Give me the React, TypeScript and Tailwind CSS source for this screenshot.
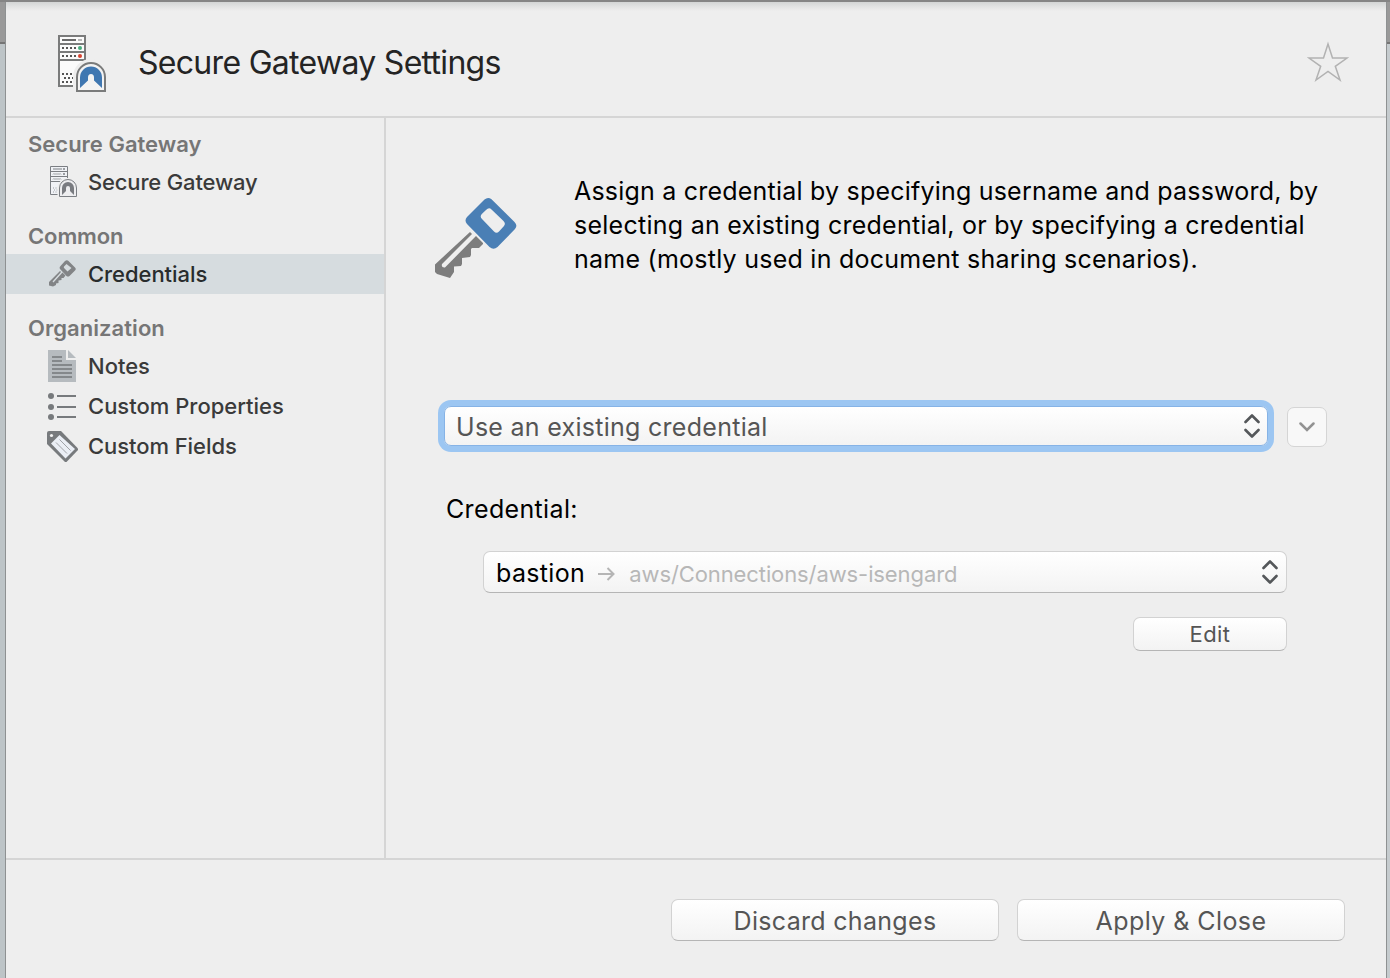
import React from "react";

function Text({ className, children }: { className: string; children: React.ReactNode }) {
  return <span className={"block w-max whitespace-nowrap " + className}>{children}</span>;
}

function GatewayIcon() {
  return (
    <svg className="h-[60px] w-[50px]" viewBox="0 0 50 60">
      <path d="M2 4H28V54H2z" fill="#fbfbfb" stroke="#7a7b7b" strokeWidth="2" />
      <path d="M2 12H28M2 20H28M2 28H28" stroke="#7a7b7b" strokeWidth="2" />
      <path d="M5 8H19" stroke="#6a6a6a" strokeWidth="2" />
      <path d="M21 8H25" stroke="#b5b5b5" strokeWidth="2" />
      <path d="M5 16H19M5 24H19M5 42H17M7 46H17M5 50H17" stroke="#555" strokeWidth="2" strokeDasharray="2 2" />
      <circle cx="23" cy="16" r="2" fill="#46ac7c" />
      <circle cx="23" cy="24" r="2" fill="#d7412f" />
      <path d="M16 60V45A18 18 0 0 1 52 45V60z" fill="#eee" />
      <path d="M20 59V45A14 14 0 0 1 48 45V59z" fill="#f3f3f3" stroke="#7a7b7b" strokeWidth="2" />
      <path d="M23 56V45.500A11 11 0 0 1 45 45.500V56L37 48.500V45.500Q37 42 34 42Q31 42 31 45.500V48.500z" fill="#3f77b1" />
    </svg>
  );
}

function SmallGatewayIcon() {
  return (
    <svg className="h-8 w-7" viewBox="0 0 28 32">
      <path d="M1.500 0.500H18.500V28.500H1.500zM1.500 5.500H18.500M1.500 10.500H18.500M1.500 15.500H18.500" fill="#f0f2f6" stroke="#7b7e83" />
      <path d="M4 3H13" stroke="#7b7e83" />
      <path d="M14 3H16M14 8H16" stroke="#9a9da2" strokeWidth="2" />
      <path d="M4 8.500l1-1 1 1 1-1 1 1 1-1 1 1 1-1 1 1M4 13.500l1-1 1 1 1-1 1 1 1-1 1 1 1-1 1 1" fill="none" stroke="#8b8e93" strokeWidth=".9" />
      <path d="M4 22H9M5 24H9M4 26H9" stroke="#999ca1" strokeDasharray="1 1.500" />
      <path d="M8.500 32V22A10 10 0 0 1 28.500 22V32z" fill="#eee" />
      <path d="M10.500 30.500V22A8.500 8.500 0 0 1 27.500 22V30.500z" fill="#ededef" stroke="#7b7e83" />
      <path d="M13 29V22A6 6 0 0 1 25 22V29L21 25V22Q21 20 19 20Q17 20 17 22V25z" fill="#797b80" />
    </svg>
  );
}

function KeyIcon() {
  return (
    <svg className="h-[82px] w-[84px]" viewBox="0 0 84 82">
      <path
        fillRule="evenodd"
        fill="#4a7fb5"
        d="M50.500 2.500Q54 -0.500 57.500 2.300L80.500 25Q84 28.500 81 32L63.500 50Q59.500 53.500 55.500 50L33 27Q30 23.500 33 20zM52 13L47.800 17Q45.500 19.500 48 22L60 34.500Q62.500 37 65 34.500L70 29Q72 26.500 69.500 24L57.500 12.500Q55 10 52 13z"
      />
      <path
        fill="#7d7d7d"
        d="M36 35L38 37L8 67Q7 71 11 70.500L42 39L49 46V47L45 51H38L37 52V58L36 60L28 61V67L27 69L20 69.500V75L16 81L3 77L1 75V67.500z"
      />
    </svg>
  );
}

function SmallKeyIcon() {
  return (
    <svg className="h-7 w-7" viewBox="0 0 28 28">
      <path fillRule="evenodd" fill="#828486" d="M16 1Q18 -.5 19.500 1L26 7.500Q27.500 9 26 10.500L20.500 16Q19 17 17.500 16L11 9Q10 7.500 11.500 6zM17.500 4L15 6.500Q14.500 7.500 15.300 8.300L18.500 11.500L22.500 8z" />
      <path fill="#828486" d="M11 11L12 12L3.500 21.500L4.500 22.500L13.500 12.500L16.500 15.500L14.500 18H12.500V20L9.500 20.500V23L7 23.500V25L4 26.500L0 25.500V22z" />
    </svg>
  );
}

function NotesIcon() {
  return (
    <svg className="h-8 w-7" viewBox="0 0 28 32">
      <path d="M0 0H18V10H28V32H0z" fill="#b6bbbf" />
      <path d="M20 0L28 8H20z" fill="#b6bbbf" />
      <path d="M4 7H14M4 11H14M4 15H24M4 19H24M4 23H24M4 27H24" stroke="#84888b" strokeWidth="2" />
    </svg>
  );
}

function ListIcon() {
  return (
    <svg className="h-7 w-7" viewBox="0 0 28 28">
      <path d="M9 4H28M9 15H28M9 25H28" stroke="#777a7d" strokeWidth="2" />
      <g fill="#777a7d"><circle cx="3" cy="4" r="3" /><circle cx="3" cy="15" r="3" /><circle cx="3" cy="25" r="3" /></g>
    </svg>
  );
}

function TagIcon() {
  return (
    <svg className="h-8 w-8" viewBox="0 0 32 32">
      <path d="M2 1H14L31 18.500V20L19.500 32H18L0 14V3Q0 1 2 1z" fill="#777a7d" />
      <path d="M12.500 5L28 19L18.500 28.500L4 13.500z" fill="#eaeef5" />
      <path d="M12.500 9.500L23.500 20.500M9 12.500L20 23.500" stroke="#8b8e93" strokeWidth=".8" />
      <circle cx="4.500" cy="5.500" r="1.600" fill="#f2f2f2" />
    </svg>
  );
}

function UpDown() {
  return (
    <svg className="h-6 w-4" viewBox="0 0 16 24" fill="none" stroke="#54575a" strokeWidth="2.600" strokeLinecap="round" strokeLinejoin="round">
      <path d="M1.500 8L8 1.500L14.500 8M1.500 16L8 22.500L14.500 16" />
    </svg>
  );
}

const button = "flex items-center rounded-[7px] border border-[#d2d2d2] border-b-[#b5b5b5] bg-linear-to-b from-white to-[#f3f3f3] ";
const heading = "text-[22px] font-semibold leading-7 text-[#767676] ";
const item = "text-[22px] font-[450] leading-7 text-[#3a3a3a] ";

export default function App() {
  return (
    <div className="relative flex h-[978px] w-[1390px] flex-col overflow-hidden bg-[#bfc6c9] font-['Inter',sans-serif] font-[430]">
      <div className="h-[2px] shrink-0 bg-[#858585]" />
      <div className="flex min-h-0 flex-1">
        <div className="w-[5px] shrink-0 bg-[#bdc4c7]"><div className="h-[42px] border-b-2 border-[#757575] bg-[#999]" /></div>
        <div className="flex w-[1382px] shrink-0 flex-col border-x border-[#8e9192] bg-[#eee]">
          <header className="flex h-[116px] shrink-0 items-start border-b-2 border-[#d5d5d5] bg-[linear-gradient(#d3d5d5_0px,#e3e4e4_5px,#eee_9px)] pl-[51px] pt-[30px]">
            <GatewayIcon />
            <Text className="ml-[31px] mt-[11px] text-[32px] leading-10 tracking-[-0.7px] text-[#242424]">Secure Gateway Settings</Text>
            <svg className="ml-auto mr-[37px] mt-[9px] h-[42px] w-[42px]" viewBox="0 0 42 42">
              <path d="M21 3L25.500 17H40L28.300 25.300L33 39L21 30.500L9 39L13.700 25.300L2 17H16.500z" fill="none" stroke="#b2b2b2" strokeWidth="1.500" />
            </svg>
          </header>
          <div className="flex h-[742px] shrink-0 border-b-2 border-[#d5d5d5]">
            <nav className="w-[380px] shrink-0 border-r-2 border-[#d5d5d5] pt-[12px]">
              <Text className={heading + "ml-[22px]"}>Secure Gateway</Text>
              <div className="mt-1 flex h-10 items-center pl-[43px]"><SmallGatewayIcon /><Text className={item + "ml-[11px] tracking-[-0.16px]"}>Secure Gateway</Text></div>
              <Text className={heading + "ml-[22px] mt-5 tracking-[-0.1px]"}>Common</Text>
              <div className="mt-1 flex h-10 items-center bg-[#d6dcdf] pl-[43px]"><SmallKeyIcon /><Text className="ml-[11px] text-[22px] font-[450] leading-7 tracking-[-0.05px] text-[#282c2d]">Credentials</Text></div>
              <Text className={heading + "ml-[22px] mt-5 tracking-[0.05px]"}>Organization</Text>
              <div className="mt-1 flex h-10 items-center pl-[42px]"><NotesIcon /><Text className={item + "ml-[12px]"}>Notes</Text></div>
              <div className="flex h-10 items-center pl-[42px]"><ListIcon /><Text className={item + "ml-[12px]"}>Custom Properties</Text></div>
              <div className="flex h-10 items-center pl-[41px]"><TagIcon /><Text className={item + "ml-[9px] tracking-[-0.07px]"}>Custom Fields</Text></div>
            </nav>
            <main className="flex flex-1 flex-col">
              <div className="flex pl-[48px] pt-[56px]">
                <div className="pt-[23px]"><KeyIcon /></div>
                <div className="ml-[56px] text-[25px] leading-[34px] text-black">
                  <Text className="tracking-[0.21px]">Assign a credential by specifying username and password, by</Text>
                  <Text className="tracking-[0.26px]">selecting an existing credential, or by specifying a credential</Text>
                  <Text className="tracking-[0.25px]">name (mostly used in document sharing scenarios).</Text>
                </div>
              </div>
              <div className="ml-[58px] mt-[127px] flex h-[41px] items-start gap-[19px]">
                <div className="flex h-10 w-[824px] items-center justify-between rounded-[7px] border border-[#86b3e6] bg-linear-to-b from-white to-[#f3f3f3] pl-[11px] pr-[7px] shadow-[0_0_0_6px_#9cc6f2]">
                  <Text className="pt-[2px] text-[25px] leading-8 tracking-[0.28px] text-[#555]">Use an existing credential</Text><UpDown />
                </div>
                <div className="mt-px flex h-10 w-10 items-center justify-center rounded-[7px] border border-[#d5d5d5] bg-[#f8f8f8]">
                  <svg className="h-[10px] w-4" viewBox="0 0 16 10"><path d="M1.500 1.500L8 8L14.500 1.500" fill="none" stroke="#929292" strokeWidth="2.500" strokeLinecap="round" /></svg>
                </div>
              </div>
              <Text className="ml-[60px] mt-[46px] text-[25px] leading-8 tracking-[0.35px] text-black">Credential:</Text>
              <div className={button + "ml-[97px] mt-[26px] h-[42px] w-[804px] pl-[12px] pr-[8px]"}>
                <Text className="pt-[2px] text-[25px] leading-8 tracking-[0.35px] text-black">bastion</Text>
                <svg className="ml-[12px] mt-[3px] h-[14px] w-[18px]" viewBox="0 0 18 14"><path d="M1 7H16M10.500 1L16.500 7L10.500 13" fill="none" stroke="#b5b5b5" strokeWidth="2" /></svg>
                <Text className="ml-[14px] mt-[4px] text-[22px] leading-8 tracking-[-0.1px] text-[#b7b7b7]">aws/Connections/aws-isengard</Text>
                <div className="ml-auto"><UpDown /></div>
              </div>
              <div className={button + "ml-[747px] mt-6 h-[34px] w-[154px] justify-center"}>
                <Text className="text-[22px] leading-7 tracking-[0.4px] text-[#555]">Edit</Text>
              </div>
            </main>
          </div>
          <footer className="flex gap-[18px] pl-[665px] pt-[39px]">
            <div className={button + "h-[42px] w-[328px] justify-center"}><Text className="pt-[2px] text-[25px] leading-8 tracking-[0.31px] text-[#555]">Discard changes</Text></div>
            <div className={button + "h-[42px] w-[328px] justify-center"}><Text className="pt-[2px] text-[25px] leading-8 tracking-[0.43px] text-[#555]">Apply &amp; Close</Text></div>
          </footer>
        </div>
        <div className="flex-1 bg-[#c5cbce]"><div className="h-[42px] border-b-2 border-[#757575] bg-[#999]" /></div>
      </div>
    </div>
  );
}
